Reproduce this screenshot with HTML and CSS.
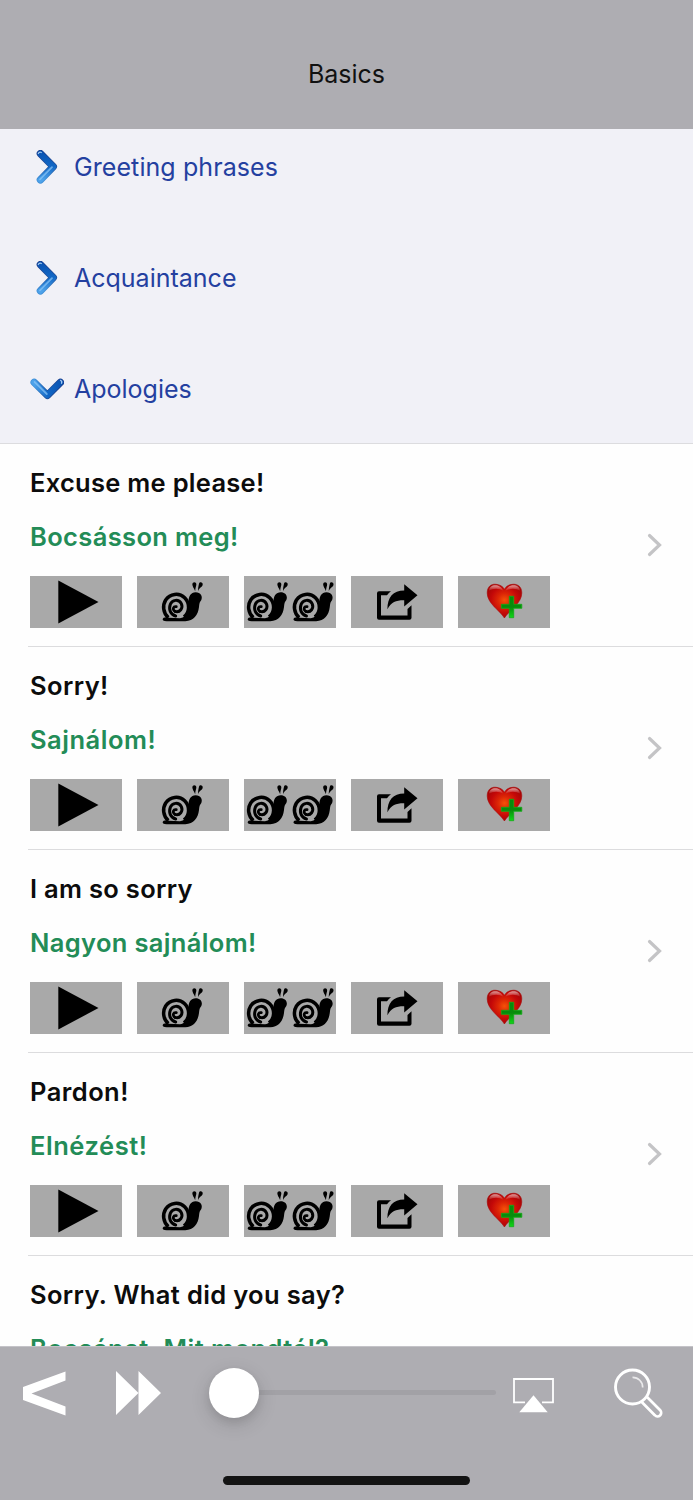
FILE: index.html
```html
<!DOCTYPE html>
<html lang="en">
<head>
<meta charset="utf-8">
<title>Basics</title>
<link rel="stylesheet" href="styles.css">
</head>
<body>
<svg class="defs" width="0" height="0" aria-hidden="true">
  <defs>
    <linearGradient id="blue" x1="0" y1="0" x2="0" y2="1">
      <stop offset="0" stop-color="#0b55b4"/><stop offset=".5" stop-color="#1268c6"/><stop offset="1" stop-color="#4da2ea"/>
    </linearGradient>
    <linearGradient id="blue-edge" x1="0" y1="0" x2="0" y2="1">
      <stop offset="0" stop-color="#1a3c8a"/><stop offset=".55" stop-color="#22559e"/><stop offset="1" stop-color="#3e8fd8"/>
    </linearGradient>
    <radialGradient id="red" cx=".5" cy=".47" r=".55">
      <stop offset="0" stop-color="#f55208"/><stop offset=".35" stop-color="#dc2606"/><stop offset=".7" stop-color="#c40808"/><stop offset="1" stop-color="#a80505"/>
    </radialGradient>
    <linearGradient id="shine" x1="0" y1="0" x2="0" y2="1">
      <stop offset="0" stop-color="#fff" stop-opacity=".6"/><stop offset="1" stop-color="#fff" stop-opacity="0"/>
    </linearGradient>
    <linearGradient id="green" x1="0" y1="0" x2="0" y2="1">
      <stop offset="0" stop-color="#078a0c"/><stop offset=".5" stop-color="#088c0c"/><stop offset="1" stop-color="#10d818"/>
    </linearGradient>
  </defs>
  <symbol id="arrow" viewBox="0 0 34 34">
    <path d="M10.400 3.600 23.300 16.600 10.400 29.800" fill="none" stroke="url(#blue-edge)" stroke-width="7.400" stroke-linecap="round" stroke-linejoin="round"/>
    <path d="M10.400 3.600 23.300 16.600 10.400 29.800" fill="none" stroke="url(#blue)" stroke-width="5.800" stroke-linecap="round" stroke-linejoin="round"/>
    <path d="M8.300 3.500Q9.300 1.500 11.300 2.500" fill="none" stroke="#a9cdf2" stroke-width="1.200" stroke-linecap="round"/>
    <path d="M22 17.200 10 29.400" fill="none" stroke="#8cc6f6" stroke-width="1.800" stroke-linecap="round" opacity=".7"/>
  </symbol>
  <symbol id="snail" viewBox="0 0 180 165">
    <path d="M23 134C23 127 32 126 42 128L75 130C99 126 101 99 101 80C100 65 107 52 122 52C137 52 144 64 139 75C134 81 133 85 132 96C129 121 116 137 91 139L43 139C31 139 24 137 23 134Z"/>
    <path d="M40 128C24 114 22 91 32 75C45 56 72 52 89 68C106 85 104 113 87 126" fill="none" stroke="#000" stroke-width="10.500"/>
    <path d="M60 109C75 114 85 99 79 86C71 71 51 74 46 88C40 104 47 119 62 123" fill="none" stroke="#000" stroke-width="9" stroke-linecap="round"/>
    <path d="M60 109C51 103 55 93 64 95" fill="none" stroke="#000" stroke-width="8" stroke-linecap="round"/>
    <path d="M112 28C112 20 124 20 124 28C124 34 121 38 120.500 49C117 39 112 35 112 28ZM132 26C134 19 145 22 143 30C141 37 133 37 129 49C129 40 130 34 132 26Z"/>
  </symbol>
  <symbol id="btn-play" viewBox="0 0 92 52"><path d="M28.300 4.500 68.500 26 28.300 47.500Z"/></symbol>
  <symbol id="btn-slow" viewBox="0 0 92 52"><use href="#snail" x="18" y="-1" width="60" height="55"/></symbol>
  <symbol id="btn-slower" viewBox="0 0 92 52"><use href="#snail" x="-4" y="-1" width="60" height="55"/><use href="#snail" x="41.800" y="-1" width="60" height="55"/></symbol>
  <symbol id="btn-share" viewBox="0 0 92 52">
    <path d="M40 15.200H28Q26 15.200 26 17.200V41.700Q26 43.700 28 43.700H58.500Q60.500 43.700 60.500 41.700V29.200L56.500 33V39.500H30V19.300H36Q37 17.300 40 15.200Z"/>
    <path d="M36.400 33.200C36.500 21 42 14.700 53.200 14.500V8.200L66.500 19.300 53.200 30.500V24.300C45 24.200 40.500 26 36.400 33.200Z"/>
  </symbol>
  <symbol id="btn-fav" viewBox="0 0 92 52">
    <path d="M46.400 42C42 34.500 29.200 27.500 29.200 17C29.200 10.500 33 8.200 37 8.200C41.800 8.200 45 10.500 46.400 13.300C47.800 10.500 51 8.200 55.500 8.200C60 8.200 63.800 10.800 63.800 17C63.800 27.500 51 34.500 46.400 42Z" fill="url(#red)" stroke="#a80c0c" stroke-width=".6"/>
    <path d="M31 15C31 7.500 42.500 7 45.400 15C41 12 35 12 31 15ZM47.400 15C50 7 62 7.500 62 15C58 12 52 12 47.400 15Z" fill="url(#shine)"/>
    <path d="M51.300 20.300H55.700V28.300H63.800V32.300H55.700V41.700H51.300V32.300H43.400V28.300H51.300Z" fill="url(#green)" stroke="#12ad16" stroke-width=".8"/>
  </symbol>
  <symbol id="chevron" viewBox="0 0 16 24"><path d="M2.500 2.500 12.500 12 2.500 21.500" fill="none" stroke="#c4c4c6" stroke-width="3.200" stroke-linecap="round"/></symbol>
</svg>

<div class="screen">
  <header class="navbar"><h1 class="title">Basics</h1></header>

  <main class="content">
    <nav class="sections">
      <a class="section first"><svg class="marker"><use href="#arrow"/></svg><span class="s1">Greeting phrases</span></a>
      <a class="section"><svg class="marker"><use href="#arrow"/></svg><span class="s2">Acquaintance</span></a>
      <a class="section"><svg class="marker open"><use href="#arrow"/></svg><span class="s3">Apologies</span></a>
    </nav>

    <section class="phrase">
      <h2 class="source p1">Excuse me please!</h2>
      <p class="target t1">Bocsásson meg!</p>
      <div class="actions">
        <svg class="btn"><use href="#btn-play"/></svg><svg class="btn"><use href="#btn-slow"/></svg><svg class="btn"><use href="#btn-slower"/></svg><svg class="btn"><use href="#btn-share"/></svg><svg class="btn"><use href="#btn-fav"/></svg>
      </div>
      <svg class="more"><use href="#chevron"/></svg>
    </section>
    <section class="phrase">
      <h2 class="source p2">Sorry!</h2>
      <p class="target t2">Sajnálom!</p>
      <div class="actions">
        <svg class="btn"><use href="#btn-play"/></svg><svg class="btn"><use href="#btn-slow"/></svg><svg class="btn"><use href="#btn-slower"/></svg><svg class="btn"><use href="#btn-share"/></svg><svg class="btn"><use href="#btn-fav"/></svg>
      </div>
      <svg class="more"><use href="#chevron"/></svg>
    </section>
    <section class="phrase">
      <h2 class="source p3">I am so sorry</h2>
      <p class="target t3">Nagyon sajnálom!</p>
      <div class="actions">
        <svg class="btn"><use href="#btn-play"/></svg><svg class="btn"><use href="#btn-slow"/></svg><svg class="btn"><use href="#btn-slower"/></svg><svg class="btn"><use href="#btn-share"/></svg><svg class="btn"><use href="#btn-fav"/></svg>
      </div>
      <svg class="more"><use href="#chevron"/></svg>
    </section>
    <section class="phrase">
      <h2 class="source p4">Pardon!</h2>
      <p class="target t4">Elnézést!</p>
      <div class="actions">
        <svg class="btn"><use href="#btn-play"/></svg><svg class="btn"><use href="#btn-slow"/></svg><svg class="btn"><use href="#btn-slower"/></svg><svg class="btn"><use href="#btn-share"/></svg><svg class="btn"><use href="#btn-fav"/></svg>
      </div>
      <svg class="more"><use href="#chevron"/></svg>
    </section>
    <section class="phrase">
      <h2 class="source p5">Sorry. What did you say?</h2>
      <p class="target t5">Bocsánat. Mit mondtál?</p>
    </section>
  </main>

  <footer class="toolbar">
    <div class="controls">
      <svg class="back" viewBox="0 0 43 45"><path d="M42.500.500V9.500L8.500 22.500 42.500 35.500V44.500L0 29V16Z" fill="#fff"/></svg>
      <svg class="forward" viewBox="0 0 45 44"><path d="M0 0 22.500 22V0L45 22 22.500 44V22L0 44Z" fill="#fff"/></svg>
      <div class="slider"><div class="knob"></div><div class="track"></div></div>
      <svg class="airplay" viewBox="0 0 41 35"><path d="M12 24.300H1V1H40V24.300H29" fill="none" stroke="#fff" stroke-width="1.800"/><path d="M20.500 17.300 34.700 34.300H6.300Z" fill="#fff"/></svg>
      <svg class="search" viewBox="0 0 50 50" fill="none" stroke="#fff"><circle cx="18.500" cy="19" r="17" stroke-width="2.900"/><path d="M18.500 9.300A10 10 0 0 1 28.700 19.500" stroke-width="1.700" opacity=".75"/><path d="M32.500 28.500 46.200 42.200A3.500 3.500 0 0 1 40.800 47.200L27.500 33.800" stroke-width="2.700"/></svg>
    </div>
    <div class="home"></div>
  </footer>
</div>
</body>
</html>
```
FILE: styles.css
```css
* { box-sizing: border-box; }
body { margin: 0; font-family: Inter, "Liberation Sans", sans-serif; }
.defs { display: block; height: 0; }
.screen { width: 693px; height: 1500px; display: flex; flex-direction: column; overflow: hidden; background: #fefefe; }

.navbar { flex: none; height: 129px; background: #aeadb2; display: flex; justify-content: center; padding-top: 58px; }
.title { margin: 0; font-size: 25px; line-height: 32px; font-weight: 400; color: #111; }

.content { height: 1217px; overflow: hidden; }
.sections { height: 315px; background: #f1f1f7; border-bottom: 1px solid #dcdcdf; }
.section { display: flex; align-items: center; height: 111px; padding-left: 30px; gap: 10px; color: #2440a0; font-size: 25px; line-height: 32px; }
.section.first { height: 93px; padding-bottom: 18px; }
.marker { flex: none; width: 34px; height: 34px; overflow: visible; }
.marker.open { transform: rotate(90deg); }
.s1 { letter-spacing: .08px; }

.phrase { display: grid; grid-template-columns: 1fr 16px; align-items: center; grid-template-rows: 32px 32px 52px; row-gap: 22px; height: 203px; margin-left: 28px; padding: 23px 30px 0 2px; border-bottom: 1px solid #dcdcde; align-content: start; }
.source, .target { margin: 0; font-size: 25.5px; line-height: 32px; font-weight: 600; white-space: nowrap; grid-column: 1; }
.source { color: #0c0c0c; }
.target { color: #238c57; }
.p1 { letter-spacing: .28px; }
.t1 { letter-spacing: .36px; }
.p2 { letter-spacing: .42px; }
.t2 { letter-spacing: .52px; }
.p3 { letter-spacing: .3px; }
.t3 { letter-spacing: .35px; }
.p4 { letter-spacing: .45px; }
.t4 { letter-spacing: .55px; }
.p5 { letter-spacing: .35px; }
.t5 { letter-spacing: .45px; }
.actions { display: flex; gap: 15px; grid-column: 1; grid-row: 3; margin-top: 2px; }
.btn { width: 92px; height: 52px; background: #a9a9a9; }
.more { grid-column: 2; grid-row: 1 / 4; width: 16px; height: 24px; margin-top: -5px; }

.toolbar { flex: none; height: 154px; background: #aeadb2; display: flex; flex-direction: column; align-items: center; border-top: 1px solid #c4c3c8; }
.controls { width: 100%; height: 93px; display: flex; align-items: center; padding-left: 23px; }
.back { width: 43px; height: 45px; }
.forward { width: 45px; height: 44px; margin-left: 50px; margin-top: -1px; }
.slider { display: flex; align-items: center; width: 287px; margin-left: 48px; margin-top: -1px; }
.knob { flex: none; width: 50px; height: 50px; border-radius: 50%; background: #fff; box-shadow: 0 6px 20px rgba(0,0,0,.14), 0 4px 8px rgba(0,0,0,.08); z-index: 1; }
.track { flex: 1; height: 5px; margin-left: -2px; margin-top: -1px; background: #a2a1a6; border-radius: 0 3px 3px 0; }
.airplay { width: 41px; height: 35px; margin-left: 17px; margin-top: 4px; }
.search { width: 50px; height: 50px; margin-left: 60px; margin-top: -2px; }
.home { width: 247px; height: 9px; margin-top: 36px; background: #141414; border-radius: 5px; }
```
